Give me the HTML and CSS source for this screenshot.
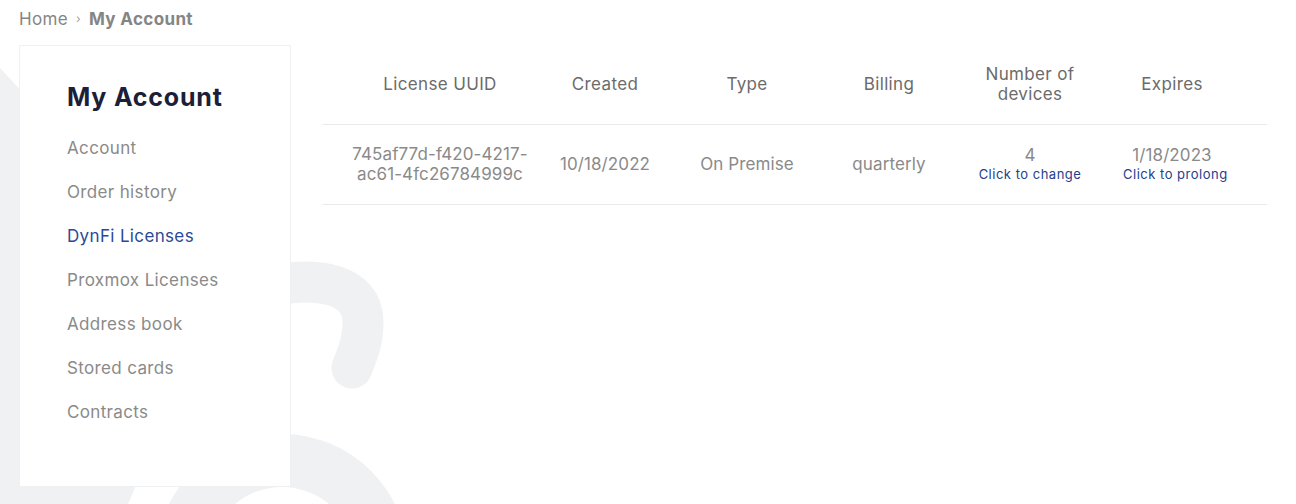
FILE: index.html
```html
<!DOCTYPE html>
<html lang="en">
<head>
<meta charset="utf-8">
<title>My Account</title>
<link rel="stylesheet" href="styles.css">
</head>
<body>
<svg class="watermark" width="1296" height="504" viewBox="0 0 1296 504" aria-hidden="true">
  <polygon points="0,68 215,300 128,504 0,504" fill="#f0f1f3"/>
  <path d="M282 560 m-126 0 a126 126 0 1 0 252 0 a126 126 0 1 0 -252 0 Z M282 560 m-73 0 a73 73 0 1 1 146 0 a73 73 0 1 1 -146 0 Z" fill="#f0f1f3" fill-rule="evenodd"/>
  <path d="M270 286 C318 276 363 284 363 322 C363 345 356 356 352 368" fill="none" stroke="#f0f1f3" stroke-width="41" stroke-linecap="round"/>
</svg>

<nav class="breadcrumb">
  <a class="crumb" href="#">Home</a>
  <span class="sep">›</span>
  <span class="crumb current">My Account</span>
</nav>

<div class="layout">
  <aside class="sidebar">
    <h2 class="sidebar-title">My Account</h2>
    <ul class="menu">
      <li><a href="#">Account</a></li>
      <li><a href="#">Order history</a></li>
      <li><a href="#" class="active">DynFi Licenses</a></li>
      <li><a href="#">Proxmox Licenses</a></li>
      <li><a href="#">Address book</a></li>
      <li><a href="#">Stored cards</a></li>
      <li><a href="#">Contracts</a></li>
    </ul>
  </aside>

  <main class="content">
    <table class="licenses">
      <colgroup>
        <col class="c-uuid">
        <col class="c-created">
        <col class="c-type">
        <col class="c-billing">
        <col class="c-devices">
        <col class="c-expires">
      </colgroup>
      <thead>
        <tr>
          <th>License UUID</th>
          <th>Created</th>
          <th>Type</th>
          <th>Billing</th>
          <th>Number of<br>devices</th>
          <th class="last">Expires</th>
        </tr>
      </thead>
      <tbody>
        <tr>
          <td>745af77d-f420-4217-<br>ac61-4fc26784999c</td>
          <td>10/18/2022</td>
          <td>On Premise</td>
          <td>quarterly</td>
          <td>4<a class="action" href="#">Click to change</a></td>
          <td class="last">1/18/2023<a class="action" href="#">Click to prolong</a></td>
        </tr>
      </tbody>
    </table>
  </main>
</div>
</body>
</html>
```

FILE: styles.css
```css
* { box-sizing: border-box; }

html, body {
  margin: 0;
  padding: 0;
  background: #ffffff;
}

body {
  position: relative;
  width: 1296px;
  height: 504px;
  overflow: hidden;
  font-family: Inter, "Open Sans", "DejaVu Sans", sans-serif;
  color: #888888;
  letter-spacing: 0.35px;
}

.watermark {
  position: absolute;
  left: 0;
  top: 0;
  z-index: 0;
  pointer-events: none;
}

.breadcrumb {
  position: relative;
  z-index: 1;
  display: flex;
  align-items: center;
  gap: 8px;
  height: 38px;
  padding: 0 19px;
  font-size: 17px;
  line-height: 20px;
}

.crumb {
  color: #858585;
  text-decoration: none;
}

.crumb.current {
  font-weight: 700;
  color: #858585;
}

.sep {
  font-size: 12px;
  color: #a0a0a0;
}

.layout {
  position: relative;
  z-index: 1;
  display: flex;
  align-items: flex-start;
  gap: 32px;
  padding: 7px 0 0 19px;
}

.sidebar {
  width: 272px;
  height: 442px;
  flex: none;
  background: #ffffff;
  border: 1px solid #eef0f2;
  padding: 36px 20px 0 47px;
}

.sidebar-title {
  margin: 0 0 24px;
  font-size: 25px;
  line-height: 30px;
  font-weight: 700;
  color: #1b2038;
  letter-spacing: 0.8px;
}

.menu {
  list-style: none;
  margin: 0;
  padding: 0;
  display: flex;
  flex-direction: column;
  gap: 20px;
}

.menu a {
  display: block;
  font-size: 17px;
  line-height: 24px;
  color: #8a8a8a;
  text-decoration: none;
}

.menu a.active {
  color: #2b4a96;
}

.content {
  width: 944px;
  flex: none;
}

.licenses {
  width: 944px;
  border-collapse: collapse;
  table-layout: fixed;
}

.c-uuid { width: 234px; }
.c-created { width: 96px; }
.c-type { width: 188px; }
.c-billing { width: 96px; }
.c-devices { width: 186px; }
.c-expires { width: 144px; }

.licenses th,
.licenses td {
  text-align: center;
  vertical-align: middle;
  font-size: 17px;
  line-height: 20px;
  padding: 19px 0 20px;
  border-bottom: 1px solid #e9e9e9;
  white-space: nowrap;
}

.licenses th {
  font-weight: 400;
  color: #6b6b6b;
}

.licenses td {
  color: #8a8a8a;
  letter-spacing: 0.1px;
}

.licenses .last {
  padding-right: 46px;
}

.action {
  display: block;
  font-size: 13px;
  line-height: 18px;
  color: #23408e;
  text-decoration: none;
  letter-spacing: 0.5px;
}
```
